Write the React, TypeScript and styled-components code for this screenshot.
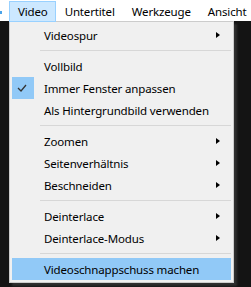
import React from "react";
import styled, { createGlobalStyle } from "styled-components";

const Global = createGlobalStyle`
  html, body { margin: 0; padding: 0; background: #161616; }
  body { width: 251px; height: 287px; overflow: hidden; font-family: "Noto Sans", "Liberation Sans", sans-serif; }
`;

const Page = styled.div`
  width: 251px;
  height: 287px;
  background: #141414;
  overflow: hidden;
  position: relative;
`;

const MenuBar = styled.div`
  display: flex;
  align-items: stretch;
  height: 21px;
  background: #ffffff;
  padding-top: 1px;
  box-sizing: border-box;
`;

const AppIcon = styled.div`
  width: 9px;
  flex: none;
  position: relative;
  &::before {
    content: "";
    position: absolute;
    left: 0;
    top: 10px;
    width: 2px;
    height: 3px;
    background: #4aa3e8;
  }
`;

const BarItem = styled.div<{ $active?: boolean }>`
  display: flex;
  align-items: center;
  flex: none;
  height: 19px;
  padding: 0 7px 0 8px;
  font-size: 11.5px;
  letter-spacing: -0.15px;
  color: #000;
  white-space: nowrap;
  border: 1px solid ${(p) => (p.$active ? "#99d1ff" : "transparent")};
  background: ${(p) => (p.$active ? "#cce8ff" : "transparent")};
`;

const Popup = styled.div`
  margin-left: 9px;
  width: 225px;
  box-sizing: border-box;
  background: #f0f0f0;
  border: 1px solid #cccccc;
  padding: 2px;
  box-shadow: 3px 3px 2px rgba(70, 70, 70, 0.55);
`;

const Item = styled.div<{ $hover?: boolean }>`
  position: relative;
  display: flex;
  align-items: center;
  height: 22px;
  padding-left: 32px;
  font-size: 11.5px;
  letter-spacing: -0.15px;
  color: #000;
  white-space: nowrap;
  background: ${(p) => (p.$hover ? "#91c9f7" : "transparent")};
`;

const CheckBox = styled.div`
  position: absolute;
  left: 0;
  top: 0;
  width: 22px;
  height: 22px;
  background: #91c9f7;
  display: flex;
  align-items: center;
  justify-content: center;
`;

const Arrow = styled.div`
  position: absolute;
  right: 11px;
  top: 8px;
  width: 0;
  height: 0;
  border-top: 3.5px solid transparent;
  border-bottom: 3.5px solid transparent;
  border-left: 4px solid #000;
`;

const Separator = styled.div`
  height: 9px;
  display: flex;
  align-items: center;
  padding-left: 28px;
  &::after {
    content: "";
    display: block;
    flex: 1;
    height: 1px;
    background: #d7d7d7;
  }
`;

type Entry =
  | { kind: "item"; label: string; sub?: boolean; checked?: boolean; hover?: boolean }
  | { kind: "sep" };

const entries: Entry[] = [
  { kind: "item", label: "Videospur", sub: true },
  { kind: "sep" },
  { kind: "item", label: "Vollbild" },
  { kind: "item", label: "Immer Fenster anpassen", checked: true },
  { kind: "item", label: "Als Hintergrundbild verwenden" },
  { kind: "sep" },
  { kind: "item", label: "Zoomen", sub: true },
  { kind: "item", label: "Seitenverhältnis", sub: true },
  { kind: "item", label: "Beschneiden", sub: true },
  { kind: "sep" },
  { kind: "item", label: "Deinterlace", sub: true },
  { kind: "item", label: "Deinterlace-Modus", sub: true },
  { kind: "sep" },
  { kind: "item", label: "Videoschnappschuss machen", hover: true },
];

export default function App() {
  return (
    <Page>
      <Global />
      <MenuBar>
        <AppIcon />
        <BarItem $active>Video</BarItem>
        <BarItem>Untertitel</BarItem>
        <BarItem>Werkzeuge</BarItem>
        <BarItem>Ansicht</BarItem>
      </MenuBar>
      <Popup>
        {entries.map((e, i) =>
          e.kind === "sep" ? (
            <Separator key={i} />
          ) : (
            <Item key={i} $hover={e.hover}>
              {e.checked && (
                <CheckBox>
                  <svg width="22" height="22" viewBox="0 0 22 22">
                    <polyline points="6,11 9,14 14,8" fill="none" stroke="#333" strokeWidth="1.3" />
                  </svg>
                </CheckBox>
              )}
              {e.label}
              {e.sub && <Arrow />}
            </Item>
          )
        )}
      </Popup>
    </Page>
  );
}
